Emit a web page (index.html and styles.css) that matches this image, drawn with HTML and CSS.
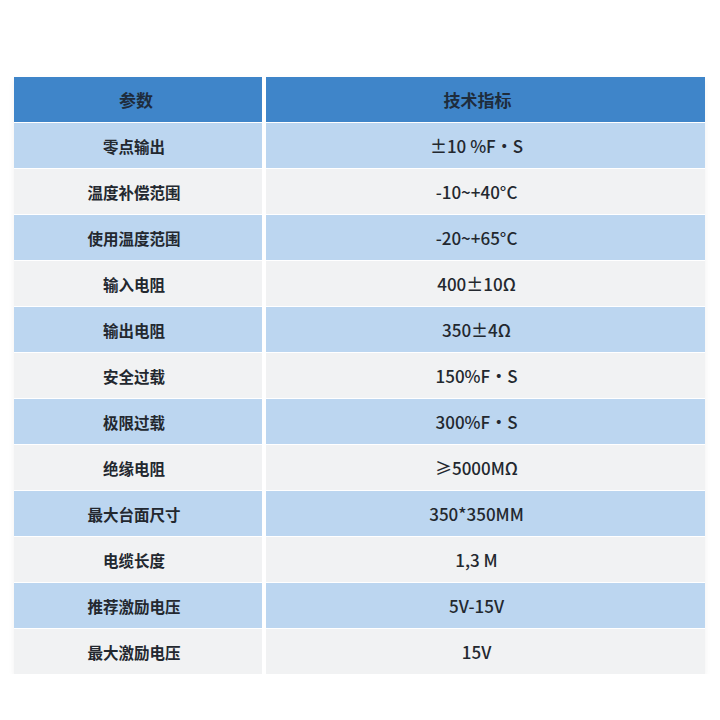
FILE: index.html
```html
<!DOCTYPE html>
<html lang="zh">
<head>
<meta charset="utf-8">
<link rel="stylesheet" href="styles.css">
</head>
<body>
<div class="table">
  <div class="row head"><div class="c k">参数</div><div class="c v">技术指标</div></div>
  <div class="row blue"><div class="c k">零点输出</div><div class="c v">±10 %F・S</div></div>
  <div class="row light"><div class="c k">温度补偿范围</div><div class="c v">-10~+40°C</div></div>
  <div class="row blue"><div class="c k">使用温度范围</div><div class="c v">-20~+65°C</div></div>
  <div class="row light"><div class="c k">输入电阻</div><div class="c v">400±10Ω</div></div>
  <div class="row blue"><div class="c k">输出电阻</div><div class="c v">350±4Ω</div></div>
  <div class="row light"><div class="c k">安全过载</div><div class="c v">150%F・S</div></div>
  <div class="row blue"><div class="c k">极限过载</div><div class="c v">300%F・S</div></div>
  <div class="row light"><div class="c k">绝缘电阻</div><div class="c v">≥5000MΩ</div></div>
  <div class="row blue"><div class="c k">最大台面尺寸</div><div class="c v">350*350MM</div></div>
  <div class="row light"><div class="c k">电缆长度</div><div class="c v">1,3 M</div></div>
  <div class="row blue"><div class="c k">推荐激励电压</div><div class="c v">5V-15V</div></div>
  <div class="row light"><div class="c k">最大激励电压</div><div class="c v">15V</div></div>
</div>
</body>
</html>
```
FILE: styles.css
```css
html, body {
  margin: 0;
  padding: 0;
  background: #ffffff;
}
body {
  padding: 77px 15px 0 14px;
  font-family: "Noto Sans CJK SC", sans-serif;
  color: #23282f;
}
.table {
  display: flex;
  flex-direction: column;
  gap: 1px;
  width: 691px;
  background: #ffffff;
  box-shadow: 0 3px 6px rgba(0, 0, 0, 0.06);
}
.row {
  display: grid;
  grid-template-columns: 248px 1fr;
  column-gap: 4px;
  height: 45px;
}
.c {
  display: flex;
  align-items: center;
  justify-content: center;
}
.k {
  font-family: "Noto Sans CJK SC", sans-serif;
  font-weight: 700;
  font-size: 15.5px;
  padding-right: 8px;
}
.v {
  font-family: "Noto Sans CJK SC", sans-serif;
  font-weight: 500;
  font-size: 17px;
  padding-right: 18px;
}
.head .c {
  background: #3f85c9;
  color: #1e2c3c;
  font-weight: 700;
  font-size: 17px;
}
.head .k { padding-right: 4px; }
.head .v { padding-right: 16px; }
.blue .c { background: #bcd6f0; }
.light .c { background: #f1f2f3; }
```
